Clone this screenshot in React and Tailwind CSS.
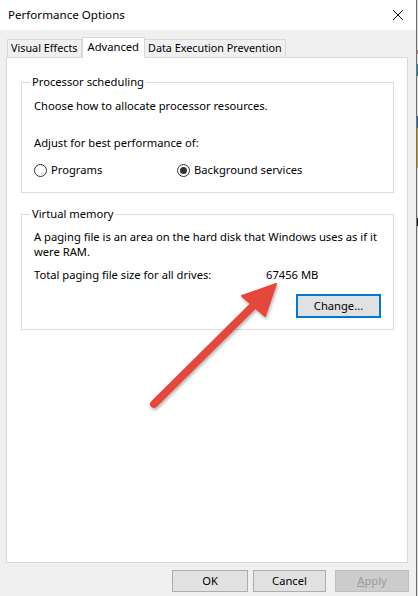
import React from "react";

const font = { fontFamily: '"Noto Sans", "Liberation Sans", sans-serif' };

function Radio({ checked, label }) {
  return (
    <div className="flex items-center gap-[4px]">
      <span className="w-[13px] h-[13px] rounded-full border border-[#333] bg-white flex items-center justify-center">
        {checked && <span className="w-[7px] h-[7px] rounded-full bg-[#333]" />}
      </span>
      <span>{label}</span>
    </div>
  );
}

export default function App() {
  return (
    <div
      className="w-[418px] h-[596px] relative flex bg-[#f0f0f0] text-[11.2px] text-black overflow-hidden"
      style={font}
    >
      <div className="w-[417px] h-full flex flex-col border-r border-[#6f6f6f]">
        {/* title bar */}
        <div className="h-[30px] bg-white flex items-center justify-between pl-[8px] pr-[12px]">
          <span className="text-[11.6px]">Performance Options</span>
          <svg width="12" height="12" viewBox="0 0 12 12">
            <path d="M1 1 L11 11 M11 1 L1 11" stroke="#111" strokeWidth="1" />
          </svg>
        </div>
        {/* body */}
        <div className="flex-1 flex flex-col pl-[6px] pr-[8px]">
          {/* tabs */}
          <div className="h-[27px] flex items-end pl-[1px] text-[10.8px]">
            <div className="h-[18px] px-[3px] flex items-center border border-b-0 border-[#d9d9d9] bg-[#f0f0f0]">
              Visual Effects
            </div>
            <div className="h-[21px] px-[5px] flex items-start pt-[1px] border border-b-0 border-[#d9d9d9] bg-white -mb-[1px] relative z-10 text-[11.2px]">
              Advanced
            </div>
            <div className="h-[18px] px-[3px] flex items-center border border-b-0 border-l-0 border-[#d9d9d9] bg-[#f0f0f0]">
              Data Execution Prevention
            </div>
          </div>
          {/* panel */}
          <div className="h-[506px] bg-white border border-[#d9d9d9] pt-[16px] px-[14px] pr-[13px] flex flex-col gap-[13px]">
            <fieldset className="border border-[#dcdcdc] px-[12px] pt-[8px] pb-[14px] min-w-0">
              <legend className="ml-[-4px] px-[2px] leading-[16px]">Processor scheduling</legend>
              <div className="leading-[16px]">Choose how to allocate processor resources.</div>
              <div className="leading-[16px] mt-[21px]">Adjust for best performance of:</div>
              <div className="flex mt-[11px] leading-[16px]">
                <div className="w-[143px]">
                  <Radio label="Programs" />
                </div>
                <Radio checked label="Background services" />
              </div>
            </fieldset>
            <fieldset className="border border-[#dcdcdc] pl-[12px] pr-[12px] pt-[7px] pb-[11px] min-w-0">
              <legend className="ml-[-4px] px-[2px] leading-[16px]">Virtual memory</legend>
              <div className="leading-[15px]">
                A paging file is an area on the hard disk that Windows uses as if it were RAM.
              </div>
              <div className="flex leading-[16px] mt-[8px]">
                <span className="w-[232px]">Total paging file size for all drives:</span>
                <span>67456 MB</span>
              </div>
              <div className="flex justify-end mt-[11px]">
                <button className="w-[85px] h-[24px] border-2 border-[#0078d7] bg-[#e1e1e1] flex items-center justify-center">
                  Change...
                </button>
              </div>
            </fieldset>
          </div>
          {/* buttons */}
          <div className="flex justify-end gap-[5px] mt-[7px] pr-[0px] mr-[-1px]">
            <button className="w-[76px] h-[22px] border border-[#adadad] bg-[#e1e1e1] flex items-center justify-center">
              OK
            </button>
            <button className="w-[73px] h-[22px] border border-[#adadad] bg-[#e1e1e1] flex items-center justify-center">
              Cancel
            </button>
            <button className="w-[74px] h-[22px] ml-[4px] border border-[#bfbfbf] bg-[#cccccc] text-[#9a9a9a] flex items-center justify-center">
              <span><span className="underline">A</span>pply</span>
            </button>
          </div>
        </div>
      </div>
      {/* right strip of background window */}
      <div className="w-[1px] h-full flex flex-col bg-[#d8d8d8]">
        <div className="h-[50px]" />
        <div className="h-[4px] bg-[#b08080]" />
        <div className="h-[10px]" />
        <div className="h-[12px] bg-[#1b7f9a]" />
        <div className="h-[40px]" />
        <div className="h-[12px] bg-[#2b5fa0]" />
        <div className="h-[40px] bg-[#c8a030]" />
        <div className="h-[50px]" />
        <div className="h-[8px] bg-[#111]" />
      </div>
      {/* annotation arrow */}
      <svg className="absolute left-0 top-0 pointer-events-none" width="418" height="596">
        <defs>
          <filter id="sh" x="-20%" y="-20%" width="140%" height="140%">
            <feDropShadow dx="1" dy="2" stdDeviation="1.5" floodColor="#000" floodOpacity="0.3" />
          </filter>
        </defs>
        <g filter="url(#sh)" fill="#e5463c" stroke="#e5463c">
          <line x1="154" y1="404" x2="256" y2="303" strokeWidth="8" strokeLinecap="round" />
          <polygon points="276,284 242,296 265,316" strokeWidth="2" strokeLinejoin="round" />
        </g>
      </svg>
    </div>
  );
}
